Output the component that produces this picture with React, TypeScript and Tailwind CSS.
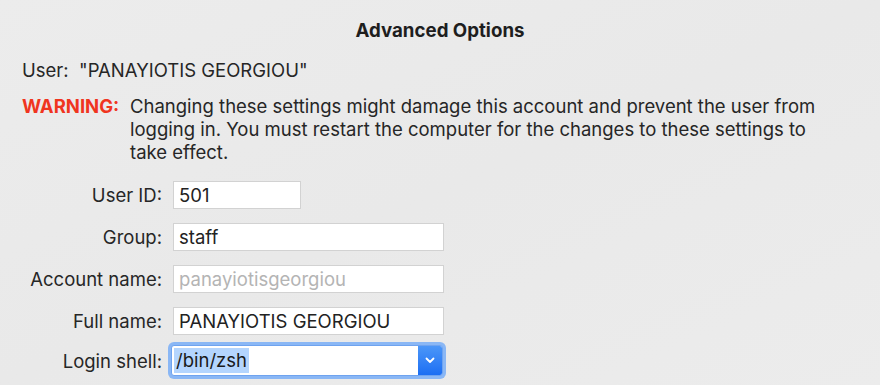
export default function App() {
  const fields = [
    { label: "User ID:", value: "501", width: "w-[128px]", muted: false },
    { label: "Group:", value: "staff", width: "w-[271px]", muted: false },
    { label: "Account name:", value: "panayiotisgeorgiou", width: "w-[271px]", muted: true },
    { label: "Full name:", value: "PANAYIOTIS GEORGIOU", width: "w-[271px]", muted: false },
  ];

  return (
    <div
      className="w-[880px] h-[385px] overflow-hidden bg-gradient-to-br from-[#ececec] via-[#e9e9e9] to-[#ececec] text-[#262626] text-[18.5px]"
      style={{ fontFamily: 'Inter, "Liberation Sans", Arial, sans-serif' }}
    >
      <div className="pt-[20px] text-center font-bold text-[18.7px] leading-[22px] text-[#1e1e1e]">
        Advanced Options
      </div>

      <div className="mt-[17px] pl-[22px] leading-[22px]">
        User:&nbsp;&nbsp;&quot;PANAYIOTIS GEORGIOU&quot;
      </div>

      <div className="mt-[14px] flex pl-[22px] leading-[23px]">
        <span className="w-[108px] shrink-0 font-bold text-[#f0351f]">WARNING:</span>
        <p className="w-[696px]">
          Changing these settings might damage this account and prevent the user from logging
          in. You must restart the computer for the changes to these settings to take effect.
        </p>
      </div>

      <div className="mt-[17px] grid grid-cols-[162px_1fr] gap-x-[11px] gap-y-[14px] items-center">
        {fields.map((f) => (
          <div key={f.label} className="contents">
            <div className="text-right leading-[28px]">{f.label}</div>
            <div
              className={`${f.width} h-[28px] bg-white border border-[#d2d2d2] pl-[5px] leading-[26px] ${
                f.muted ? "text-[#b4b4b4] bg-[#f7f7f7]" : "text-[#222]"
              }`}
            >
              {f.value}
            </div>
          </div>
        ))}
        <div className="text-right leading-[28px] mt-[-7px]">Login shell:</div>
        <div className="mt-[-7px] -ml-[5px] w-[278px] h-[37px] rounded-[6px] bg-[#8ab7f5] p-[3px]">
          <div className="flex h-full rounded-[3px] bg-white border border-[#6fa3ef] overflow-hidden">
            <div className="flex-1 flex items-center pl-[2px]">
              <span className="bg-[#b4d5fe] px-[2px] leading-[25px] text-[#1a1a1a]">/bin/zsh</span>
            </div>
            <div className="w-[24px] flex items-center justify-center bg-gradient-to-b from-[#4b96f8] to-[#1b6ef3]">
              <svg width="10" height="7" viewBox="0 0 10 7" fill="none">
                <path d="M1.5 1.5 L5 5 L8.5 1.5" stroke="white" strokeWidth="1.8" strokeLinecap="round" strokeLinejoin="round" />
              </svg>
            </div>
          </div>
        </div>
      </div>
    </div>
  );
}
